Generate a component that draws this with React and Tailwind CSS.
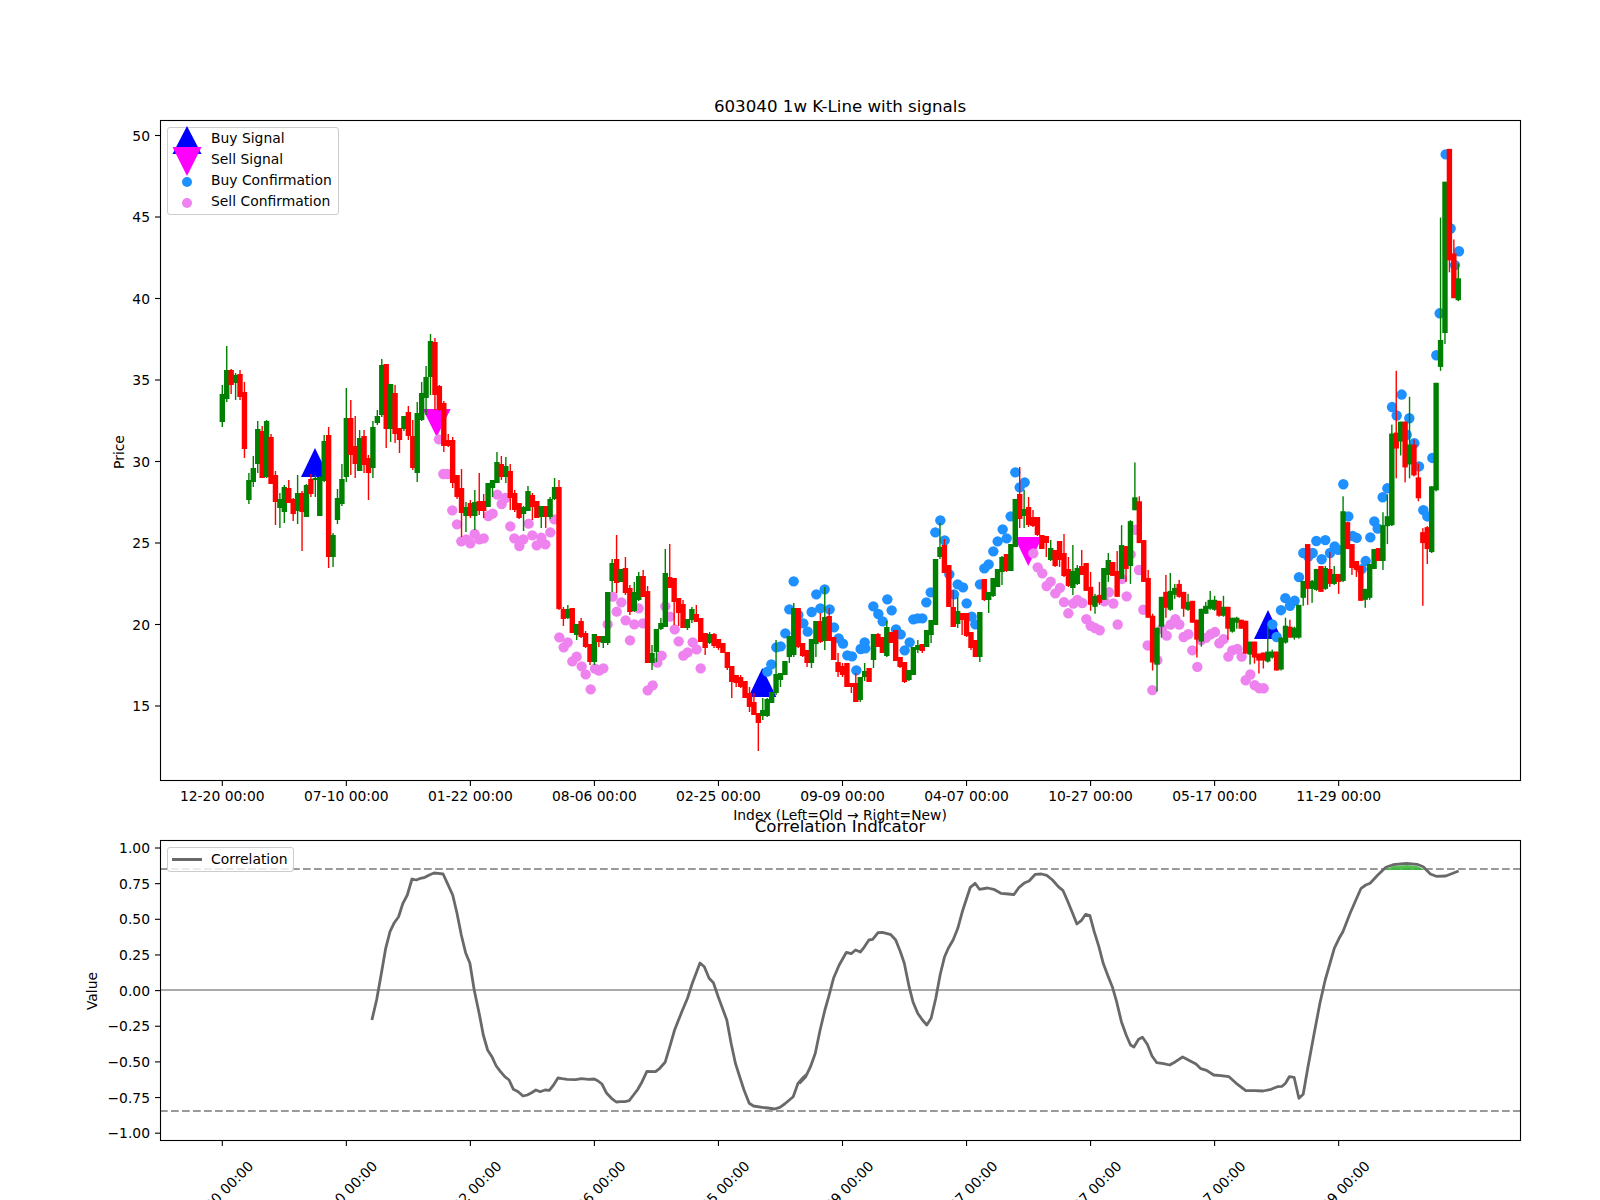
import React from 'react';

// candle rows: colour, body top, body bottom, wick top, wick bottom (page px)
const CANDLES = [
  ['g',394,422,385,427],['g',370,399,346,402],['r',370,385,369,394],['g',375,383,373,400],['r',374,397,370,400],
  ['r',392,449,382,458],['g',480,500,473,504],['g',468,482,456,487],['g',429,464,421,473],['r',431,478,426,478],
  ['g',421,477,420,478],['r',437,484,434,484],['r',475,502,471,525],['g',499,508,493,528],['g',487,512,485,523],
  ['r',488,503,480,503],['r',499,514,498,521],['g',493,511,475,524],['r',493,512,491,551],['g',485,517,484,517],
  ['r',479,494,474,497],['g',478,480,475,497],['g',477,516,476,516],['g',441,481,435,482],['r',435,557,427,568],
  ['g',535,557,533,567],['g',498,520,489,524],['g',479,504,464,506],['g',418,477,388,482],['r',418,455,400,475],
  ['r',446,464,416,478],['g',438,471,430,471],['r',436,465,430,473],['r',458,473,455,500],['g',427,468,421,478],
  ['g',416,423,410,425],['g',365,415,359,417],['r',364,429,364,448],['g',384,429,384,442],['r',393,434,385,443],
  ['r',428,440,428,453],['g',416,429,416,431],['r',412,436,406,440],['r',436,468,420,470],['g',413,473,402,482],
  ['g',393,420,382,421],['g',377,398,366,415],['g',341,377,334,395],['r',342,395,338,410],['r',386,410,385,411],
  ['r',403,446,401,452],['r',440,446,434,447],['r',440,483,437,488],['r',475,497,475,499],['r',488,513,469,537],
  ['g',507,516,502,532],['r',503,516,500,518],['g',502,516,490,530],['r',501,511,473,515],['r',501,511,494,518],
  ['g',483,507,483,507],['g',480,488,480,497],['g',462,483,452,483],['r',464,477,456,480],['g',466,477,457,483],
  ['r',471,498,464,510],['r',493,510,490,512],['r',503,518,503,519],['g',507,514,506,531],['g',491,511,486,511],
  ['r',495,507,493,520],['r',501,518,501,518],['g',506,517,506,528],['r',506,517,506,528],['g',499,517,497,519],
  ['g',487,499,478,500],['r',487,609,480,610],['r',609,619,607,626],['g',609,618,605,619],['r',608,633,608,633],
  ['g',624,635,624,640],['r',621,637,618,638],['r',633,647,631,648],['r',644,662,644,665],['g',634,662,634,665],
  ['r',636,642,636,647],['g',636,643,636,648],['g',592,643,592,645],['g',563,581,559,592],['r',559,583,535,593],
  ['g',569,582,569,582],['r',568,593,557,595],['r',588,612,585,615],['g',592,611,582,612],['g',576,600,572,601],
  ['r',576,597,570,597],['r',591,663,586,663],['g',653,663,645,670],['g',629,652,629,662],['g',623,629,618,630],
  ['g',573,627,549,627],['r',577,588,544,588],['r',578,602,578,625],['r',598,613,598,626],['r',604,628,600,628],
  ['g',619,628,619,630],['g',609,620,607,623],['r',614,622,605,622],['r',618,642,618,642],['r',633,648,633,655],
  ['g',634,643,632,644],['r',634,646,633,648],['r',639,648,639,650],['r',643,653,643,653],['r',652,668,652,670],
  ['r',666,682,666,698],['r',675,683,675,687],['r',677,687,675,688],['r',681,698,681,698],['r',693,707,687,712],
  ['r',702,715,693,715],['r',713,723,713,751],['g',710,716,698,720],['g',699,716,698,717],['g',692,703,692,703],
  ['g',674,693,640,695],['g',673,680,673,687],['g',661,675,661,675],['g',636,657,636,663],['g',608,655,603,657],
  ['r',608,647,608,648],['r',643,656,643,657],['r',650,663,650,667],['g',639,663,639,668],['g',621,644,621,657],
  ['r',621,642,613,643],['g',617,641,587,650],['r',616,641,608,641],['r',637,660,637,660],['r',662,672,653,677],
  ['r',666,675,663,677],['r',663,687,663,687],['r',683,687,683,693],['r',683,702,673,702],['g',677,700,677,702],
  ['g',671,677,663,681],['r',668,682,668,682],['g',634,660,634,668],['r',634,647,633,647],['r',637,653,637,653],
  ['g',627,656,621,657],['r',632,643,632,643],['r',630,661,630,661],['r',657,667,657,668],['r',662,682,662,683],
  ['g',670,680,670,681],['g',647,675,647,675],['g',645,650,640,653],['r',644,651,644,653],['g',630,647,630,647],
  ['g',620,635,620,643],['g',559,625,559,625],['g',547,557,523,559],['r',545,573,539,573],['r',565,607,565,607],
  ['r',607,627,590,627],['g',611,624,597,628],['r',613,620,613,635],['r',613,636,613,637],['r',632,648,632,650],
  ['r',640,657,640,657],['g',612,657,612,662],['r',579,600,579,601],['g',592,600,592,613],['g',578,596,578,597],
  ['g',569,587,569,587],['g',557,572,556,585],['r',554,571,554,572],['g',544,571,544,571],['g',499,547,499,547],
  ['r',494,519,467,528],['g',509,516,490,528],['r',507,525,497,527],['r',517,526,510,527],['r',517,535,517,536],
  ['r',535,549,535,549],['r',536,543,536,557],['g',548,560,540,561],['r',550,566,550,567],['r',541,560,541,567],
  ['r',553,576,534,577],['r',569,586,557,587],['g',571,588,545,595],['g',568,584,565,585],['r',568,577,552,577],
  ['r',565,593,565,593],['r',589,607,574,613],['g',598,609,596,616],['r',597,605,584,607],['g',570,602,570,602],
  ['g',562,577,555,584],['r',564,578,564,578],['r',573,599,553,599],['g',547,581,527,581],['r',548,571,548,584],
  ['g',523,568,522,586],['g',499,512,464,512],['r',503,545,498,545],['r',542,584,542,584],['r',580,620,572,620],
  ['r',618,665,616,673],['g',630,667,630,694],['g',599,629,599,640],['r',594,610,577,620],['g',593,612,575,613],
  ['g',590,597,586,601],['r',586,599,582,600],['r',594,611,594,619],['g',604,612,596,613],['r',603,625,603,625],
  ['r',622,642,622,660],['g',611,644,611,649],['g',608,616,604,616],['g',602,611,593,612],['g',602,612,598,613],
  ['r',603,618,603,619],['g',609,618,598,619],['r',609,631,609,642],['g',620,634,620,635],['g',620,625,619,631],
  ['r',622,631,622,631],['r',623,656,623,656],['g',644,657,644,667],['r',644,660,644,666],['r',656,663,656,676],
  ['r',655,663,655,671],['g',654,664,629,665],['g',654,660,652,661],['r',654,673,654,673],['g',640,672,640,673],
  ['g',628,645,620,646],['r',629,640,622,640],['g',630,640,629,642],['g',607,640,607,641],['g',583,600,583,608],
  ['r',546,591,546,607],['g',583,591,582,605],['g',571,592,571,593],['r',568,594,568,594],['g',570,591,568,592],
  ['r',571,586,554,589],['g',576,586,568,587],['r',576,584,576,596],['g',513,583,498,584],['r',524,551,524,551],
  ['r',546,570,546,577],['r',563,572,563,579],['r',568,603,568,603],['g',591,602,591,610],['g',566,600,566,602],
  ['g',551,571,551,571],['r',550,563,550,563],['g',527,563,514,572],['g',518,528,496,546],['g',435,527,426,528],
  ['r',434,450,372,480],['g',423,443,423,457],['r',423,469,423,484],['g',446,466,398,480],['r',446,477,441,478],
  ['r',479,500,465,503],['r',534,545,530,608],['r',529,551,528,566],['g',488,554,488,555],['g',384,492,384,493],
  ['g',341,368,218,372],['g',182,334,182,345],['r',149,261,149,273],['r',254,299,240,299],['g',279,301,264,302],
];

// dots were read off the 3x crops, these turn crop numbers into page px
const cropA = ([x, y]) => [100 + x / 3, 400 + y / 3];
const cropB = ([x, y]) => [580 + x / 3, 400 + y / 3];
const cropC = ([x, y]) => [1060 + x / 3, 120 + y / 2.24];

const SELL_DOTS = [
  ...[[1017,118],[1030,222],[1042,222],[1057,331],[1071,373],[1084,424],[1099,418],[1111,430],[1124,402],[1138,418],[1151,415],[1165,348],[1178,341],[1192,284],[1205,312],[1216,294],[1231,379],[1243,415],[1258,438],[1270,418],[1286,371],[1297,406],[1310,436],[1324,413],[1336,433],[1351,397],[1363,358],[1378,712],[1391,742],[1403,727],[1417,784],[1430,770]].map(cropA),
  ...[[5,799],[17,823],[32,868],[45,806],[57,812],[70,805],[83,673],[98,590],[110,635],[124,607],[137,661],[150,721],[163,673],[176,625],[189,670],[203,871],[218,856],[232,788],[245,767],[256,619],[270,650],[284,688],[296,724],[310,767],[323,757],[338,727],[350,748],[362,805],[1360,460],[1373,502],[1387,520],[1400,558],[1412,545],[1426,580]].map(cropB),
  ...[[0,1048],[12,1080],[25,1105],[40,1083],[52,1075],[67,1082],[79,1118],[92,1133],[105,1138],[119,1143],[133,1078],[147,1058],[160,1083],[173,1130],[186,1028],[200,1067],[212,973],[225,918],[237,1008],[250,1097],[263,1177],[277,1277],[292,1210],[306,1140],[320,1155],[332,1130],[346,1118],[358,1130],[371,1158],[385,1152],[397,1188],[412,1225],[424,1165],[438,1160],[452,1152],[465,1147],[478,1172],[491,1163],[505,1202],[517,1188],[532,1185],[545,1202],[557,1255],[571,1242],[584,1266],[598,1273],[611,1273]].map(cropC),
];

const BUY_DOTS = [
  ...[[562,815],[574,793],[589,742],[602,739],[616,700],[628,628],[641,544],[655,645],[670,670],[683,695],[695,636],[709,583],[721,625],[734,568],[749,628],[762,682],[776,715],[789,731],[802,766],[816,769],[829,811],[842,747],[854,727],[856,745],[880,619],[895,642],[908,664],[922,598],[935,631],[948,688],[962,703],[974,751],[989,727],[1000,658],[1013,655],[1027,655],[1039,607],[1052,577],[1066,397],[1081,361],[1094,421],[1108,523],[1122,583],[1133,553],[1149,562],[1160,610],[1175,650],[1186,673],[1200,553],[1213,505],[1226,493],[1240,454],[1253,424],[1268,388],[1280,415],[1292,349],[1306,217],[1319,262],[1334,247]].map(cropB),
  ...[[637,1130],[650,1158],[663,1098],[676,1071],[690,1088],[704,1077],[717,1024],[730,970],[745,978],[758,970],[769,943],[785,984],[796,941],[810,970],[824,955],[835,963],[850,816],[865,888],[878,932],[890,936],[905,1006],[917,988],[931,935],[943,899],[953,915],[968,845],[982,825],[996,643],[1010,662],[1025,615],[1040,705],[1048,668],[1063,724],[1077,776],[1090,874],[1102,888],[1117,757],[1129,527],[1139,433],[1157,77],[1172,243],[1185,325],[1197,294]].map(cropC),
];

const corrA = ([x, y]) => [60 + x / 2.0907, 800 + y / 3];
const corrB = ([x, y]) => [800 + x / 2.0907, 800 + y / 3];

const CORRELATION = [
  ...[[652,660],[662,600],[672,520],[681,445],[690,395],[699,368],[708,350],[717,310],[726,285],[736,237],[745,240],[754,235],[763,232],[772,225],[782,219],[791,220],[801,222],[810,250],[821,285],[830,340],[839,405],[848,458],[857,490],[866,570],[877,645],[885,705],[894,750],[903,770],[912,798],[921,815],[930,830],[939,840],[948,868],[958,875],[968,888],[977,885],[986,878],[995,870],[1004,875],[1014,870],[1023,871],[1032,855],[1041,834],[1050,836],[1060,838],[1078,839],[1090,836],[1105,838],[1117,837],[1125,843],[1133,852],[1143,880],[1153,895],[1163,906],[1172,905],[1181,905],[1190,902],[1199,885],[1208,868],[1217,845],[1227,814],[1245,815],[1254,805],[1265,787],[1275,740],[1285,690],[1300,635],[1312,595],[1322,550],[1338,489],[1347,500],[1357,535],[1366,548],[1376,590],[1394,660],[1403,730],[1412,790],[1421,830],[1430,870],[1441,910],[1450,918],[1468,922],[1480,924],[1494,927],[1505,922],[1515,912],[1533,890],[1543,850],[1552,835],[1562,822]].map(corrA),
  ...[[0,848],[12,830],[22,800],[32,760],[42,690],[52,630],[60,590],[70,535],[82,495],[97,457],[107,461],[116,450],[126,456],[134,442],[144,420],[152,418],[163,398],[172,397],[190,404],[200,420],[210,455],[218,490],[228,560],[236,605],[246,640],[256,660],[265,675],[274,655],[284,595],[293,525],[302,472],[310,445],[320,420],[330,385],[340,332],[356,262],[366,250],[375,268],[392,264],[405,268],[420,280],[436,282],[447,284],[458,262],[470,248],[479,243],[492,223],[505,222],[516,226],[528,240],[540,260],[550,272],[560,305],[570,340],[579,372],[588,362],[597,343],[606,347],[615,395],[625,440],[634,490],[644,528],[653,560],[662,605],[672,665],[682,705],[691,735],[698,741],[708,718],[716,712],[726,733],[736,768],[746,788],[760,791],[773,795],[785,785],[800,771],[812,780],[828,792],[838,806],[850,811],[865,825],[880,827],[897,830],[912,850],[932,872],[950,872],[968,873],[985,868],[998,860],[1008,859],[1015,850],[1023,830],[1033,832],[1043,895],[1052,883],[1062,800],[1075,700],[1087,610],[1098,540],[1117,445],[1127,415],[1135,395],[1150,340],[1163,297],[1173,265],[1183,255],[1192,250],[1208,225],[1225,202],[1240,194],[1268,190],[1290,193],[1303,200],[1318,222],[1330,229],[1350,228],[1365,220],[1377,213]].map(corrB),
];

const DATE_LABELS = ['12-20 00:00', '07-10 00:00', '01-22 00:00', '08-06 00:00', '02-25 00:00', '09-09 00:00', '04-07 00:00', '10-27 00:00', '05-17 00:00', '11-29 00:00'];
const tickX = (i) => 222.3 + i * 124.04;
const candleX = (i) => 222.3 + i * 4.43;
// candles from 194 on came from the squashed crop, pull their y back a touch
const candleY = (i, y) => (i >= 194 ? 120 + (y - 120) * 0.9955 : y);

const PRICE_TICKS = [[50, 135.5], [45, 217], [40, 298.5], [35, 380], [30, 461.5], [25, 543], [20, 624.5], [15, 706]];
const VALUE_TICKS = ['1.00', '0.75', '0.50', '0.25', '0.00', '−0.25', '−0.50', '−0.75', '−1.00'];

const toPath = (pts) => pts.map(([x, y], i) => `${i ? 'L' : 'M'}${x.toFixed(1)} ${y.toFixed(1)}`).join(' ');

const Triangle = ({ x, top, bottom, color, half = 14 }) => (
  <polygon points={`${x - half},${bottom} ${x + half},${bottom} ${x},${top}`} fill={color} />
);

const PriceChart = () => (
  <svg viewBox="0 0 1600 825" className="block w-[1600px] h-[825px] overflow-visible">
    <text x="840" y="112" textAnchor="middle" className="text-[16.67px]">603040 1w K-Line with signals</text>

    {/* signals sit below dots, dots below candles */}
    <Triangle x={315} top={448} bottom={477} color="#0000ff" />
    <Triangle x={762.3} top={668} bottom={697} color="#0000ff" />
    <Triangle x={1268} top={610} bottom={639} color="#0000ff" />
    <Triangle x={436.7} top={437} bottom={409} color="#ff00ff" />
    <Triangle x={1028.3} top={566} bottom={537} color="#ff00ff" />

    {SELL_DOTS.map(([x, y], i) => <circle key={i} cx={x} cy={y} r="5.2" fill="#ee82ee" />)}
    {BUY_DOTS.map(([x, y], i) => <circle key={i} cx={x} cy={y} r="5.2" fill="#1e90ff" />)}

    {CANDLES.map(([c, top, bot, wickTop, wickBot], i) => {
      const color = c === 'g' ? '#008000' : '#ff0000';
      const x = candleX(i);
      const bodyTop = candleY(i, top);
      const lineTop = candleY(i, wickTop);
      return (
        <g key={i}>
          <rect x={x - 0.7} y={lineTop} width="1.4" height={candleY(i, wickBot) - lineTop} fill={color} />
          <rect x={x - 2.7} y={bodyTop} width="5.4" height={candleY(i, bot) - bodyTop} fill={color} />
        </g>
      );
    })}

    <rect x="160.5" y="120.5" width="1360" height="660" fill="none" stroke="#000" strokeWidth="1.1" />
    {PRICE_TICKS.map(([label, y]) => (
      <g key={label}>
        <line x1="155" x2="160" y1={y} y2={y} stroke="#000" strokeWidth="1.1" />
        <text x="150" y={y + 5} textAnchor="end" className="text-[13.89px]">{label}</text>
      </g>
    ))}
    {DATE_LABELS.map((label, i) => (
      <g key={label}>
        <line x1={tickX(i)} x2={tickX(i)} y1="781" y2="786" stroke="#000" strokeWidth="1.1" />
        <text x={tickX(i)} y="801" textAnchor="middle" className="text-[13.89px]">{label}</text>
      </g>
    ))}
    <text x="840" y="820" textAnchor="middle" className="text-[13.89px]">Index (Left=Old → Right=New)</text>
    <text x="124" y="452" textAnchor="middle" transform="rotate(-90 124 452)" className="text-[13.89px]">Price</text>
  </svg>
);

const CorrelationChart = () => (
  <svg viewBox="0 825 1600 375" className="block w-[1600px] h-[375px] overflow-visible">
    <text x="840" y="832" textAnchor="middle" className="text-[16.67px]">Correlation Indicator</text>

    <line x1="160" x2="1520" y1="990" y2="990" stroke="#aaaaaa" strokeWidth="2.1" />
    <line x1="160" x2="1520" y1="869" y2="869" stroke="#999999" strokeWidth="2.1" strokeDasharray="7.7 3.3" />
    <line x1="160" x2="1520" y1="1111" y2="1111" stroke="#999999" strokeWidth="2.1" strokeDasharray="7.7 3.3" />

    {/* fill sits over the dashes, they show through it */}
    <path d="M1385 870 L1393 866 L1407 865 L1417 866 L1425 870 Z" fill="#33b533" fillOpacity="0.85" />
    <path d={toPath(CORRELATION)} fill="none" stroke="#696969" strokeWidth="2.8" strokeLinejoin="round" />

    <rect x="160.5" y="840.5" width="1360" height="300" fill="none" stroke="#000" strokeWidth="1.1" />
    {VALUE_TICKS.map((label, i) => {
      const y = 848 + i * 35.65;
      return (
        <g key={label}>
          <line x1="155" x2="160" y1={y} y2={y} stroke="#000" strokeWidth="1.1" />
          <text x="150" y={y + 5} textAnchor="end" className="text-[13.89px]">{label}</text>
        </g>
      );
    })}
    {DATE_LABELS.map((label, i) => (
      <g key={label}>
        <line x1={tickX(i)} x2={tickX(i)} y1="1141" y2="1146" stroke="#000" strokeWidth="1.1" />
        <text
          x={tickX(i) + 32}
          y="1167"
          textAnchor="end"
          transform={`rotate(-45 ${tickX(i) + 32} 1167)`}
          className="text-[13.89px]"
        >
          {label}
        </text>
      </g>
    ))}
    <text x="97" y="991" textAnchor="middle" transform="rotate(-90 97 991)" className="text-[13.89px]">Value</text>
  </svg>
);

const SignalLegend = () => (
  <div className="absolute left-[167px] top-[127px] w-[172px] h-[88px] rounded-[3px] border border-[#cccccc] bg-white/80 text-[13.89px] leading-[21px]">
    {[
      ['Buy Signal', <polygon key="a" points="4.5,28 33.5,28 19,0" fill="#0000ff" />, 'top-[-2px]'],
      ['Sell Signal', <polygon key="b" points="4.5,0 33.5,0 19,29" fill="#ff00ff" />, 'top-[-2px]'],
      ['Buy Confirmation', <circle key="c" cx="19" cy="5" r="5" fill="#1e90ff" />, 'top-[7px]'],
      ['Sell Confirmation', <circle key="d" cx="19" cy="5" r="5" fill="#ee82ee" />, 'top-[7px]'],
    ].map(([label, mark, offset]) => (
      <div key={label} className="relative flex h-[21px] items-center pl-[43px]">
        <svg className={`absolute left-0 overflow-visible ${offset}`} width="38" height="30">
          {mark}
        </svg>
        <span className="relative">{label}</span>
      </div>
    ))}
  </div>
);

const CorrelationLegend = () => (
  <div className="absolute left-[167px] top-[22px] flex h-[25px] w-[127px] items-center gap-[9px] rounded-[3px] border border-[#cccccc] bg-white/80 pl-[4px] text-[13.89px]">
    <span className="h-[3px] w-[30px] bg-[#696969]" />
    <span>Correlation</span>
  </div>
);

export default function App() {
  return (
    <div className="flex h-[1200px] w-[1600px] flex-col overflow-hidden bg-white font-['DejaVu_Sans',sans-serif] text-black">
      <section className="relative h-[825px]">
        <PriceChart />
        <SignalLegend />
      </section>
      <section className="relative h-[375px]">
        <CorrelationChart />
        <CorrelationLegend />
      </section>
    </div>
  );
}
